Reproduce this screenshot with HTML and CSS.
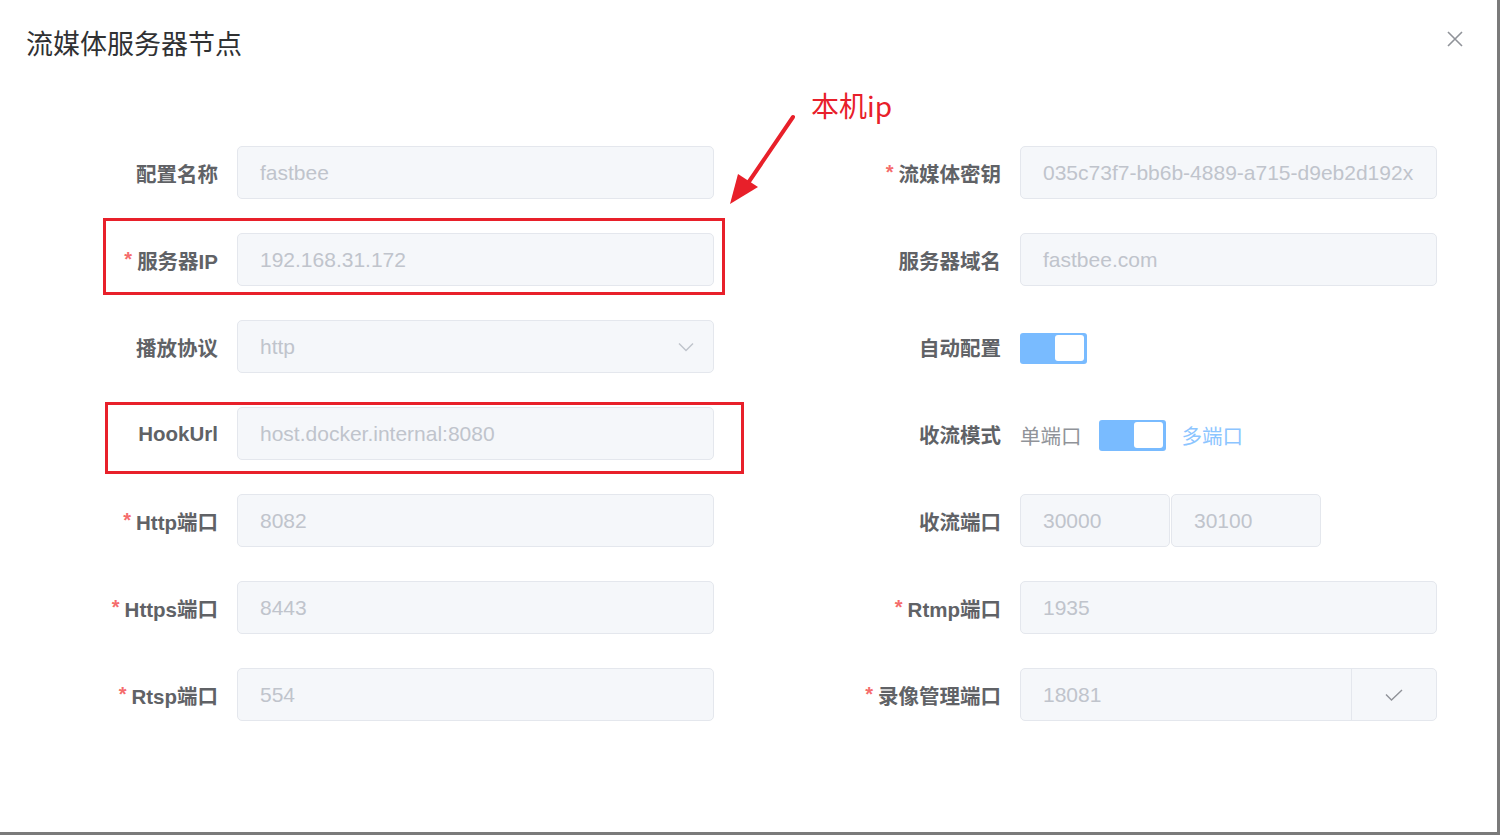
FILE: index.html
```html
<!DOCTYPE html>
<html lang="zh">
<head>
<meta charset="utf-8">
<title>流媒体服务器节点</title>
<link rel="stylesheet" href="styles.css">
</head>
<body>
<div class="dialog">
  <div class="header">
    <span class="title">流媒体服务器节点</span>
    <svg class="close" width="16" height="16" viewBox="0 0 16 16"><path d="M1 1L15 15M15 1L1 15" stroke="#909399" stroke-width="1.6" fill="none"/></svg>
  </div>
  <div class="form">
    <label class="lbl">配置名称</label>
    <div class="inp">fastbee</div>
    <label class="lbl"><i>*</i>流媒体密钥</label>
    <div class="inp">035c73f7-bb6b-4889-a715-d9eb2d192x</div>

    <label class="lbl"><i>*</i>服务器IP</label>
    <div class="inp">192.168.31.172</div>
    <label class="lbl">服务器域名</label>
    <div class="inp">fastbee.com</div>

    <label class="lbl">播放协议</label>
    <div class="inp select">http
      <svg class="chev" width="16" height="10" viewBox="0 0 16 10"><path d="M1 1.5L8 8.5L15 1.5" stroke="#c0c4cc" stroke-width="1.5" fill="none"/></svg>
    </div>
    <label class="lbl">自动配置</label>
    <div class="ctl"><span class="switch"><span class="knob"></span></span></div>

    <label class="lbl">HookUrl</label>
    <div class="inp">host.docker.internal:8080</div>
    <label class="lbl">收流模式</label>
    <div class="ctl"><span class="sw-txt">单端口</span><span class="switch"><span class="knob"></span></span><span class="sw-txt on">多端口</span></div>

    <label class="lbl"><i>*</i>Http端口</label>
    <div class="inp">8082</div>
    <label class="lbl">收流端口</label>
    <div class="ctl pair"><div class="inp small">30000</div><div class="inp small">30100</div></div>

    <label class="lbl"><i>*</i>Https端口</label>
    <div class="inp">8443</div>
    <label class="lbl"><i>*</i>Rtmp端口</label>
    <div class="inp">1935</div>

    <label class="lbl"><i>*</i>Rtsp端口</label>
    <div class="inp">554</div>
    <label class="lbl"><i>*</i>录像管理端口</label>
    <div class="inp group"><span class="gtext">18081</span><span class="append"><svg width="18" height="12" viewBox="0 0 18 12"><path d="M1 5.5L6.5 11L17 1" stroke="#909399" stroke-width="1.4" fill="none"/></svg></span></div>
  </div>

  <div class="mark mark1"></div>
  <div class="mark mark2"></div>
  <div class="note">本机ip</div>
  <svg class="arrow" width="80" height="100" viewBox="0 0 80 100">
    <path d="M65 3L18 72" stroke="#e8202a" stroke-width="4" stroke-linecap="round" fill="none"/>
    <path d="M2 90L10 60L30 73Z" fill="#e8202a"/>
  </svg>
</div>
</body>
</html>
```
FILE: styles.css
```css
html, body {
  margin: 0;
  padding: 0;
}
body {
  background: #7a7a7a;
  width: 1500px;
  height: 835px;
  overflow: hidden;
  font-family: "Liberation Sans", "Noto Sans CJK SC", sans-serif;
}
.dialog {
  position: relative;
  width: 1497px;
  height: 832px;
  background: #fff;
}
.header {
  display: flex;
  justify-content: space-between;
  align-items: center;
  padding: 26px 38px 0 26px;
  height: 34px;
}
.title {
  font-family: "Noto Sans CJK SC", sans-serif;
  font-size: 27px;
  color: #303133;
  line-height: 34px;
}
.close {
  margin-top: -8px;
  margin-right: -4px;
}
.form {
  display: grid;
  grid-template-columns: 237px 477px 306px 417px;
  grid-auto-rows: 53px;
  row-gap: 34px;
  margin-top: 86px;
}
.lbl {
  display: flex;
  align-items: center;
  justify-content: flex-end;
  padding-right: 19px;
  font-size: 20.5px;
  font-weight: bold;
  color: #606266;
}
.lbl i {
  font-style: normal;
  font-weight: bold;
  color: #f56c6c;
  margin-right: 5px;
  font-size: 20px;
}
.inp {
  box-sizing: border-box;
  display: flex;
  align-items: center;
  background: #f5f7fa;
  border: 1px solid #e4e7ed;
  border-radius: 5px;
  padding-left: 22px;
  font-size: 21px;
  color: #c0c4cc;
  position: relative;
}
.select .chev {
  position: absolute;
  right: 19px;
  top: 21px;
}
.ctl {
  display: flex;
  align-items: center;
}
.switch {
  box-sizing: border-box;
  width: 67px;
  height: 31px;
  margin-top: 3px;
  background: #79bbff;
  border-radius: 3px;
  display: flex;
  justify-content: flex-end;
  align-items: center;
  padding-right: 3px;
}
.knob {
  width: 29px;
  height: 26px;
  background: #fff;
  border-radius: 3px;
}
.sw-txt {
  font-family: "Noto Sans CJK SC", sans-serif;
  font-size: 20.5px;
  color: #909399;
  margin-right: 17px;
  margin-top: 2px;
}
.sw-txt.on {
  color: #8cc5ff;
  margin-right: 0;
  margin-left: 16px;
}
.pair {
  gap: 1px;
}
.inp.small {
  width: 150px;
  height: 53px;
}
.group {
  padding-right: 0;
  overflow: hidden;
}
.gtext {
  flex: 1;
}
.append {
  width: 84px;
  height: 100%;
  border-left: 1px solid #e4e7ed;
  display: flex;
  align-items: center;
  justify-content: center;
}
.mark {
  position: absolute;
  border: 3px solid #e8202a;
  box-sizing: border-box;
}
.mark1 {
  left: 103px;
  top: 218px;
  width: 622px;
  height: 77px;
}
.mark2 {
  left: 105px;
  top: 402px;
  width: 639px;
  height: 72px;
}
.note {
  position: absolute;
  left: 811px;
  top: 86px;
  font-family: "Noto Sans CJK SC", sans-serif;
  font-size: 28px;
  line-height: 38px;
  color: #e8202a;
}
.arrow {
  position: absolute;
  left: 728px;
  top: 114px;
}
```
